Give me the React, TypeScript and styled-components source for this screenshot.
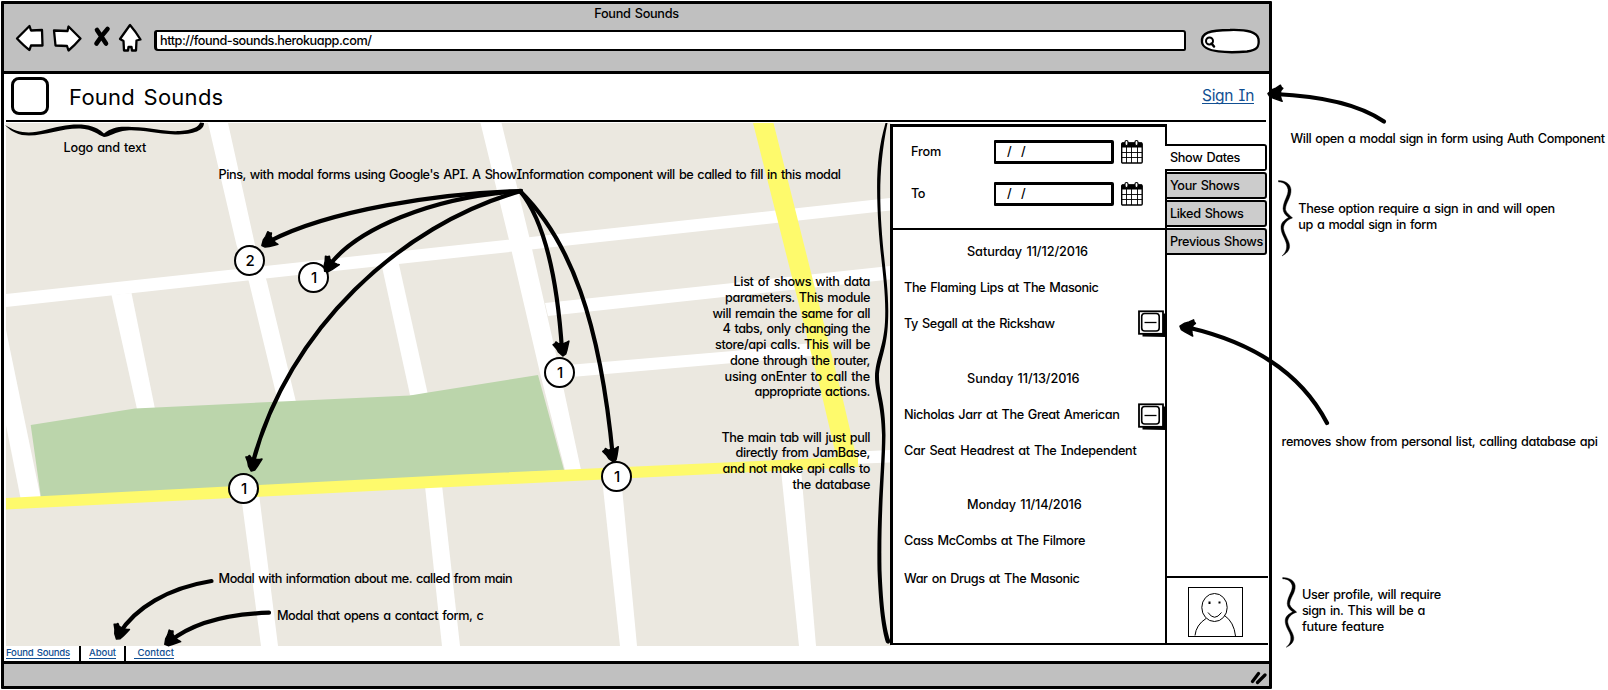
import React, { useLayoutEffect, useRef, useState } from 'react';
import styled, { createGlobalStyle, css } from 'styled-components';

const ink = '#000';
const chromeGrey = '#c0c0c0';
const linkBlue = '#114f92';

const GlobalStyle = createGlobalStyle`
  *, *::before, *::after { box-sizing: border-box; }
  html, body { margin: 0; padding: 0; background: #fff; }
  body {
    width: 1608px;
    height: 690px;
    overflow: hidden;
    color: ${ink};
    font-family: Inter, Lato, "Liberation Sans", sans-serif;
    font-size: 13px;
    font-weight: 450;
    line-height: 16px;
    font-feature-settings: "cv11" 1, "cv08" 1, "calt" 0;
  }
`;

/* ---------- text fitted to a drawn width ---------- */

const Label = styled.span<{ $size: number; $link?: boolean }>`
  display: inline-block;
  flex: none;
  white-space: pre;
  word-spacing: 0.09em;
  font-size: ${(p) => p.$size}px;
  font-weight: ${(p) => (p.$size > 14 ? 400 : 450)};
  line-height: ${(p) => Math.round(p.$size * 1.25)}px;
  ${(p) => p.$link && css`color: ${linkBlue};`}
`;

type FitProps = { children: string; w: number; size?: number; link?: boolean };

function Fit({ children, w, size = 12.7, link }: FitProps) {
  const ref = useRef<HTMLSpanElement>(null);
  const [spacing, setSpacing] = useState(0);
  useLayoutEffect(() => {
    const el = ref.current;
    if (!el) return;
    const old = el.style.letterSpacing;
    el.style.letterSpacing = '0px';
    const natural = el.getBoundingClientRect().width;
    el.style.letterSpacing = old;
    setSpacing((w - natural) / children.length);
  }, [children, w, size]);
  return (
    <Label ref={ref} $size={size} $link={link} style={{ letterSpacing: `${spacing}px` }}>
      {children}
    </Label>
  );
}

/* ---------- browser frame ---------- */

const Page = styled.div`
  position: relative;
  width: 1608px;
  height: 690px;
  padding: 1px;
  overflow: hidden;
`;

const BrowserWindow = styled.div`
  display: flex;
  flex-direction: column;
  width: 1271px;
  height: 688px;
  border: 3px solid ${ink};
  border-radius: 1px;
  background: #fff;
`;

const Chrome = styled.div`
  flex: none;
  height: 70px;
  background: ${chromeGrey};
  border-bottom: 3px solid ${ink};
`;

const ChromeTitle = styled.div`
  display: flex;
  justify-content: center;
  padding-top: 2px;
  height: 23px;
  line-height: 16px;
`;

const Toolbar = styled.div`
  display: flex;
  align-items: center;
  height: 27px;
  margin-top: -3px;
  padding: 0 8px 0 11px;
`;

const NavIcons = styled.svg`
  flex: none;
  width: 128px;
  height: 30px;
`;

const UrlBar = styled.div`
  display: flex;
  align-items: center;
  width: 1032px;
  flex: none;
  height: 21px;
  margin: 6px 0 0 11px;
  padding-left: 3px;
  background: #fff;
  border: 2px solid ${ink};
  border-left-width: 3px;
  border-radius: 3px 3px 2px 4px;
`;

const SearchPill = styled.svg`
  flex: none;
  width: 62px;
  height: 28px;
  margin: 7px 0 0 13px;
`;

const AppHeader = styled.header`
  display: flex;
  align-items: center;
  flex: none;
  height: 48px;
  margin: 0 3px 0 2px;
  padding: 0 12px 3px 5px;
  border-bottom: 2px solid ${ink};
`;

const Logo = styled.div`
  width: 38px;
  height: 38px;
  border: 3px solid ${ink};
  border-radius: 8px;
  background: #fff;
`;

const Brand = styled.div`
  flex: 1;
  display: flex;
  padding: 3px 0 0 20px;
`;

const SignIn = styled.a`
  display: flex;
  border-bottom: 1px solid ${linkBlue};
  height: 18px;
  margin-top: -1px;
`;

const Main = styled.main`
  display: flex;
  flex: none;
  height: 524px;
  padding-left: 2px;
`;

const MapArea = styled.svg`
  flex: none;
  width: 885px;
  height: 523px;
  margin-top: 1px;
`;

/* ---------- show panel ---------- */

const Panel = styled.section`
  flex: none;
  width: 277px;
  height: 521px;
  margin: 2px 0 0 -1px;
  border: 2px solid ${ink};
  border-width: 3px 2px 2px 3px;
  background: #fff;
`;

const Filters = styled.div`
  display: flex;
  flex-direction: column;
  height: 103px;
  padding-top: 12px;
  gap: 17px;
  border-bottom: 2px solid ${ink};
`;

const FilterRow = styled.div`
  display: flex;
  align-items: center;
  height: 25px;
  padding-left: 18px;
`;

const FilterName = styled.div`
  width: 83px;
`;

const DateInput = styled.div`
  display: flex;
  align-items: center;
  gap: 9px;
  width: 120px;
  height: 24px;
  padding-left: 11px;
  border: 2px solid ${ink};
  border-width: 3px 3px 3px 2px;
  border-radius: 1px 2px 2px 1px;
`;

const Calendar = styled.svg`
  width: 24px;
  height: 25px;
  margin-left: 6px;
`;

const ShowList = styled.div`
  display: flex;
  flex-direction: column;
  gap: 18.5px;
  padding-top: 3px;
`;

const ShowRow = styled.div<{ $heading?: boolean; $drop?: number }>`
  display: flex;
  align-items: center;
  justify-content: space-between;
  height: 36px;
  margin-top: ${(p) => p.$drop ?? 0}px;
  padding-top: 2px;
  padding-left: ${(p) => (p.$heading ? 74 : 11)}px;
`;

const RemoveIcon = styled.svg<{ $low?: boolean }>`
  flex: none;
  width: 28px;
  height: 27px;
  margin: ${(p) => (p.$low ? '4px -1px 0 0' : '0 -1px 2px 0')};
`;

/* ---------- side tabs ---------- */

const Side = styled.aside`
  display: flex;
  flex-direction: column;
  width: 104px;
  margin-left: -2px;
`;

const Tabs = styled.div`
  display: flex;
  flex-direction: column;
  gap: 1px;
  padding-top: 22px;
  width: 102px;
  flex: 1;
`;

const Tab = styled.div<{ $active?: boolean }>`
  display: flex;
  align-items: center;
  height: 27px;
  padding: 1px 0 0 3px;
  background: #ccc;
  border: 2px solid ${ink};
  border-radius: 0 3px 3px 0;
  ${(p) =>
    p.$active &&
    css`
      background: #fff;
      padding-left: 5px;
      border-left: 0;
    `}
`;

const Profile = styled.div`
  height: 69px;
  width: 101px;
  margin: 0 0 1px 2px;
  padding: 9px 0 0 21px;
  border-top: 2px solid ${ink};
  border-bottom: 2px solid ${ink};
`;

const Avatar = styled.svg`
  display: block;
  width: 56px;
  height: 51px;
`;

const FooterLinks = styled.footer`
  display: flex;
  flex: none;
  height: 15px;
  padding-left: 2px;
`;

const FooterLink = styled.a<{ $gap: number }>`
  display: flex;
  height: 13px;
  padding-top: 1px;
  margin-right: ${(p) => p.$gap}px;
  border-bottom: 1px solid ${linkBlue};
`;

const Divider = styled.i`
  width: 2px;
  margin-right: 8px;
  background: ${ink};
`;

const StatusBar = styled.div`
  display: flex;
  justify-content: flex-end;
  flex: 1;
  padding: 6px 2px 0 0;
  border-top: 3px solid ${ink};
  background: ${chromeGrey};
`;

/* ---------- annotation canvas ---------- */

const Sketches = styled.svg`
  position: absolute;
  left: 0;
  top: 0;
  width: 1608px;
  height: 690px;
  pointer-events: none;
`;

const Pin = styled.div<{ $x: number; $y: number }>`
  position: absolute;
  left: ${(p) => p.$x - 15.5}px;
  top: ${(p) => p.$y - 15.5}px;
  width: 31px;
  height: 31px;
  display: flex;
  align-items: center;
  justify-content: center;
  padding-left: 1px;
  border: 2px solid ${ink};
  border-radius: 50%;
  background: #fff;
  font-size: 15px;
`;

const Note = styled.div<{ $x: number; $y: number; $right?: boolean }>`
  position: absolute;
  top: ${(p) => p.$y - 8}px;
  ${(p) => (p.$right ? `right: ${1608 - p.$x}px;` : `left: ${p.$x + 0.6}px;`)}
  display: flex;
  flex-direction: column;
  align-items: ${(p) => (p.$right ? 'flex-end' : 'flex-start')};
  & > span { line-height: 15.75px; }
`;

type NoteData = { x: number; y: number; right?: boolean; lines: [string, number][] };

const notes: NoteData[] = [
  { x: 63, y: 148, lines: [['Logo and text', 82.5]] },
  { x: 218, y: 174.5, lines: [['Pins, with modal forms using Google\'s API. A ShowInformation component will be called to fill in this modal', 622]] },
  {
    x: 870, y: 282, right: true,
    lines: [
      ['List of shows with data', 136.5], ['parameters. This module', 145], ['will remain the same for all', 157.5],
      ['4 tabs, only changing the', 147.5], ['store/api calls. This will be', 155], ['done through the router,', 140],
      ['using onEnter to call the', 145.5], ['appropriate actions.', 115.5],
    ],
  },
  {
    x: 870, y: 437.5, right: true,
    lines: [['The main tab will just pull', 148.5], ['directly from JamBase,', 134.5], ['and not make api calls to', 147.5], ['the database', 77.5]],
  },
  { x: 218, y: 578.5, lines: [['Modal with information about me. called from main', 293.5]] },
  { x: 276.3, y: 615.5, lines: [['Modal that opens a contact form, c', 206.5]] },
  { x: 1290, y: 138.5, lines: [['Will open a modal sign in form using Auth Component', 314]] },
  { x: 1297.7, y: 209, lines: [['These option require a sign in and will open', 256.5], ['up a modal sign in form', 138.5]] },
  { x: 1281, y: 441.5, lines: [['removes show from personal list, calling database api', 316]] },
  { x: 1301.3, y: 595, lines: [['User profile, will require', 139], ['sign in. This will be a', 123], ['future feature', 82]] },
];

const pins = [
  { x: 249.7, y: 260.7, n: 2 },
  { x: 313.7, y: 277.7, n: 1 },
  { x: 559.7, y: 372.7, n: 1 },
  { x: 243.7, y: 488.7, n: 1 },
  { x: 616.7, y: 476.7, n: 1 },
];

const arrows = [
  { d: 'M521 191 C440 193 330 210 270 241', tip: [261, 246], turn: -30 },
  { d: 'M521 191 C430 197 355 230 329 266', tip: [324, 272], turn: -50 },
  { d: 'M521 191 C400 225 288 330 253 462', tip: [251, 472], turn: -74 },
  { d: 'M520 191 C548 225 558 290 562 350', tip: [563, 357], turn: -94 },
  { d: 'M520 191 C570 240 600 320 613 458', tip: [613.5, 463], turn: -98 },
  { d: 'M1384 121.5 C1360 105 1320 96 1275 94', tip: [1267, 93.5], turn: 3 },
  { d: 'M1327 423 C1302 375 1255 343 1188 327.5', tip: [1179, 326], turn: 12 },
  { d: 'M211.500 581 C168 588 135 608 119 634', tip: [116, 640], turn: -62 },
  { d: 'M269 612.700 C228 614 192 623 169 642', tip: [164, 645], turn: -36 },
];

const sideBrace =
  'M0 0 C6 0 12 3 12.500 9 C13 17 7 22 7 29 C8 33 12 35 14 37.500 C9 39 5 43 5 48 C6 55 12 61 11 67 C10 72 6 74 3.500 75.500 C7 72 8.500 69 8 64 C7 58 2 53 2.500 46 C3 41 7 39 10 37 C7 35 4.500 32 4.500 28 C5 20 10 15 9.500 9 C8.500 4 5 1.500 0 1.500Z';

const Sketch = () => (
  <Sketches viewBox="0 0 1608 690" fill="none">
    {arrows.map((a) => (
      <g key={a.d}>
        <path d={a.d} stroke={ink} strokeWidth="4.200" strokeLinecap="round" />
        <path
          transform={`translate(${a.tip[0]} ${a.tip[1]}) rotate(${a.turn})`}
          d="M1 0 L5 -4 L9 -6 L13 -9 L14 -7 L15.500 -6 L13.500 -3.500 L13.500 -1.500 L13.500 2 L14.500 5 L15.500 7 L12 6 L7 4.500 L3 3 Z"
          fill={ink}
          stroke={ink}
          strokeWidth="1.500"
          strokeLinejoin="round"
        />
      </g>
    ))}
    <path
      fill={ink}
      d="M5 125 C18 133.500 30 134 45 130 S78 122 92 126.500 C98 128 101 131 104 133.500 C112 127 120 126 132 127 C152 127.500 165 132 180 131 C192 130 199 127 200 122.500 L204 123 C204 130 195 134.500 175 134.500 C155 133.500 140 129.500 127 130.500 C115 131.500 109 137 104 137 C98 135 93 129 80 128.500 C60 128 42 137.500 22 135 C12 132.500 8 128 5 125Z"
    />
    <path
      fill={ink}
      d="M885.500 123 C876 155 876 185 878.500 227 C881 265 886.500 290 885 322 C883.500 348 875.500 358 875 377 C875 392 881.500 405 882 435 C882 470 876.500 510 877.500 570 C879 608 882 630 886 642.500 C888 645 891 643 890 640 C886 628 883 608 881.500 570 C880.500 510 885 470 885.500 435 C885.500 402 879 392 879 377 C879 362 887 350 888 322 C889.500 290 884 265 881.500 227 C879 190 880 160 887.500 123Z"
    />
    <path d={sideBrace} transform="translate(1278.500 180.500)" fill={ink} stroke={ink} strokeWidth=".4" />
    <path d={sideBrace} transform="translate(1282.700 577.500) scale(1 .925)" fill={ink} stroke={ink} strokeWidth=".4" />
  </Sketches>
);

const StreetMap = () => (
  <MapArea viewBox="6 123 885 523" preserveAspectRatio="none">
    <rect x="6" y="123" width="885" height="523" fill="#ebe8e0" />
    <g fill="#fff">
      <path d="M6 294 L440 247 L890 198 L890 210.500 L440 259.500 L243 281 L6 307Z" />
      <path d="M208 123 L228 123 L255 245 L267 282 L296 402 L278 402 L249 282 L236.500 245Z" />
      <path d="M111.500 295 L131.500 293 L155 409 L137 409Z" />
      <path d="M6 330 L40.500 497 L20.500 498 L6 425Z" />
      <path d="M381 262 L398 260 L428 395 L410 395Z" />
      <path d="M480.500 123 L501.500 123 L530 240 L560 372 L581 470 L565 470 L540 373 L509 240Z" />
      <path d="M545 303 L733 283 L890 266 L890 279.500 L733 296 L548 316Z" />
      <path d="M556 366 L733 351 L822 342 L822 355 L733 363 L560 378Z" />
      <path d="M850 452 L890 450 L890 462.500 L850 464Z" />
      <path d="M241 495 L259 494 L278 646 L261 646Z" />
      <path d="M425 486 L442 485 L460 646 L442 646Z" />
      <path d="M602 478 L621 477 L637 646 L620 646Z" />
      <path d="M781 470 L801 469 L816 646 L799 646Z" />
    </g>
    <path d="M30.700 425 L135 408.500 L410 395.500 L425 393 L538 375 L564 470 L41 498Z" fill="#bbd5ab" />
    <g fill="#fefa6c">
      <path d="M6 498 L460 474.500 L858 456.500 L858 467 L460 486.500 L6 509.500Z" />
      <path d="M753 123 L773.500 123 L843 400 L858 464 L838 464 L823 400Z" />
    </g>
  </MapArea>
);

const NavigationIcons = () => (
  <NavIcons viewBox="15 22 128 30" fill="#fff" stroke={ink} strokeWidth="2.300" strokeLinejoin="round" strokeLinecap="round">
    <path d="M17 37.500 L29.500 25 L31 29.500 L42 29 L42.500 44.500 L31 44.500 L29.500 49 Q24 45 17 37.500Z" />
    <path d="M80.500 37.500 L68.500 25.500 L67.500 30 L54 29.500 L55.500 44.500 L67 45 L68.500 49.500 Q75 44 80.500 37.500Z" />
    <path d="M97 29 Q101 35 106 42.500 M107.500 28 Q102 34 96.500 42.500" fill="none" strokeWidth="4.600" />
    <path d="M130 24 L120 38 L123.500 40 L124 49.500 L128 49.500 L128.500 46 L131.500 46 L132 49.500 L136 49.500 L136.500 39.500 L140.500 38.500 Q136 31 130 24Z" />
  </NavIcons>
);

const CalendarIcon = () => (
  <Calendar viewBox="0 0 24 25">
    <rect x="1.700" y="4" width="20.500" height="20" rx="1" fill="#fff" stroke={ink} strokeWidth="1.400" />
    <rect x="2" y="3.500" width="20" height="5" fill={ink} />
    <path d="M2 13.500H22 M2 18.500H22 M6.500 8V24 M11.500 8V24 M17.500 8V24" stroke={ink} strokeWidth=".9" />
    <rect x="5" y="1.500" width="3" height="5" rx="1.500" fill="#fff" stroke={ink} strokeWidth="1.200" />
    <rect x="15" y="1.500" width="3" height="5" rx="1.500" fill="#fff" stroke={ink} strokeWidth="1.200" />
  </Calendar>
);

const Remove = ({ low }: { low?: boolean }) => (
  <RemoveIcon $low={low} viewBox="0 0 28 27">
    <path d="M4.500 4 L28 3.500 L28 27 L4.500 26.500Z" fill={ink} />
    <rect x="1" y="1.300" width="24" height="22.500" fill="#fff" stroke={ink} strokeWidth="1.800" />
    <rect x="3.700" y="3.500" width="17.500" height="17.500" rx="3" fill="#fff" stroke={ink} strokeWidth="1.600" />
    <path d="M6.500 12.500H18.500" stroke={ink} strokeWidth="1.300" />
  </RemoveIcon>
);

type Show = { title: string; w: number; remove?: 'level' | 'low'; drop?: number };

const groups: { day: string; w: number; shows: Show[] }[] = [
  {
    day: 'Saturday 11/12/2016', w: 121,
    shows: [
      { title: 'The Flaming Lips at The Masonic', w: 194.5 },
      { title: 'Ty Segall at the Rickshaw', w: 150.5, remove: 'level' },
    ],
  },
  {
    day: 'Sunday 11/13/2016', w: 112.5,
    shows: [
      { title: 'Nicholas Jarr at The Great American', w: 215.5, remove: 'low' },
      { title: 'Car Seat Headrest at The Independent', w: 232.5 },
    ],
  },
  {
    day: 'Monday 11/14/2016', w: 114.5,
    shows: [
      { title: 'Cass McCombs at The Filmore', w: 181 },
      { title: 'War on Drugs at The Masonic', w: 175.5, drop: 2 },
    ],
  },
];

const tabs = [
  { name: 'Show Dates', w: 70 },
  { name: 'Your Shows', w: 69.5 },
  { name: 'Liked Shows', w: 73.5 },
  { name: 'Previous Shows', w: 93 },
];

const filters = [
  { name: 'From', w: 30 },
  { name: 'To', w: 14 },
];

export default function App() {
  return (
    <Page>
      <GlobalStyle />
      <BrowserWindow>
        <Chrome>
          <ChromeTitle><Fit w={84.5}>Found Sounds</Fit></ChromeTitle>
          <Toolbar>
            <NavigationIcons />
            <UrlBar><Fit w={211.5}>http://found-sounds.herokuapp.com/</Fit></UrlBar>
            <SearchPill viewBox="1199 27 62 28" fill="none" stroke={ink}>
              <path d="M1202 42 C1201 33 1209 30 1230 30 C1248 29.500 1257 32 1258.500 39 C1259.500 47 1257 50 1247 51.500 C1230 53 1203 53 1202 42Z" fill="#fff" strokeWidth="2.300" />
              <circle cx="1209.500" cy="41" r="3.500" strokeWidth="2" />
              <path d="M1211.500 43.500 L1214 46.500" strokeWidth="2.500" strokeLinecap="round" />
            </SearchPill>
          </Toolbar>
        </Chrome>
        <AppHeader>
          <Logo />
          <Brand><Fit w={154.5} size={22}>Found Sounds</Fit></Brand>
          <SignIn><Fit w={52} size={15.5} link>Sign In</Fit></SignIn>
        </AppHeader>
        <Main>
          <StreetMap />
          <Panel>
            <Filters>
              {filters.map((f) => (
                <FilterRow key={f.name}>
                  <FilterName><Fit w={f.w}>{f.name}</Fit></FilterName>
                  <DateInput><Fit w={5}>/</Fit><Fit w={5}>/</Fit></DateInput>
                  <CalendarIcon />
                </FilterRow>
              ))}
            </Filters>
            <ShowList>
              {groups.map((g) => (
                <div key={g.day}>
                  <ShowRow $heading><Fit w={g.w}>{g.day}</Fit></ShowRow>
                  {g.shows.map((s) => (
                    <ShowRow key={s.title} $drop={s.drop}>
                      <Fit w={s.w}>{s.title}</Fit>
                      {s.remove && <Remove low={s.remove === 'low'} />}
                    </ShowRow>
                  ))}
                </div>
              ))}
            </ShowList>
          </Panel>
          <Side>
            <Tabs>
              {tabs.map((t, i) => (
                <Tab key={t.name} $active={i === 0}><Fit w={t.w}>{t.name}</Fit></Tab>
              ))}
            </Tabs>
            <Profile>
              <Avatar viewBox="0 0 56 51" fill="none" stroke={ink} strokeWidth="1">
                <rect x=".5" y=".5" width="54" height="49" />
                <ellipse cx="26.500" cy="20.500" rx="12.700" ry="14" />
                <path d="M20 25.500 Q26.500 35 33.500 25.500 M18 31.500 Q8 38 7 48.500 M36.500 28.500 Q46 35 47.500 49" />
                <path d="M21.500 14.500V17 M31.500 14.500V16.500" strokeWidth="2" />
              </Avatar>
            </Profile>
          </Side>
        </Main>
        <FooterLinks>
          <FooterLink $gap={9}><Fit w={64} size={9.6} link>Found Sounds</Fit></FooterLink>
          <Divider />
          <FooterLink $gap={8}><Fit w={27} size={9.6} link>About</Fit></FooterLink>
          <Divider />
          <FooterLink $gap={0}><Fit w={40} size={9.6} link>{' Contact'}</Fit></FooterLink>
        </FooterLinks>
        <StatusBar>
          <svg width="17" height="15" viewBox="0 0 17 15" stroke={ink} strokeWidth="3.200" strokeLinecap="round">
            <path d="M2.500 11.500 L8.500 3.500 M7.500 12.500 L15 5" />
          </svg>
        </StatusBar>
      </BrowserWindow>
      {pins.map((p) => (
        <Pin key={`${p.x}`} $x={p.x} $y={p.y}>{p.n}</Pin>
      ))}
      <Sketch />
      {notes.map((n) => (
        <Note key={n.lines[0][0]} $x={n.x} $y={n.y} $right={n.right}>
          {n.lines.map(([text, w]) => <Fit key={text} w={w}>{text}</Fit>)}
        </Note>
      ))}
    </Page>
  );
}
